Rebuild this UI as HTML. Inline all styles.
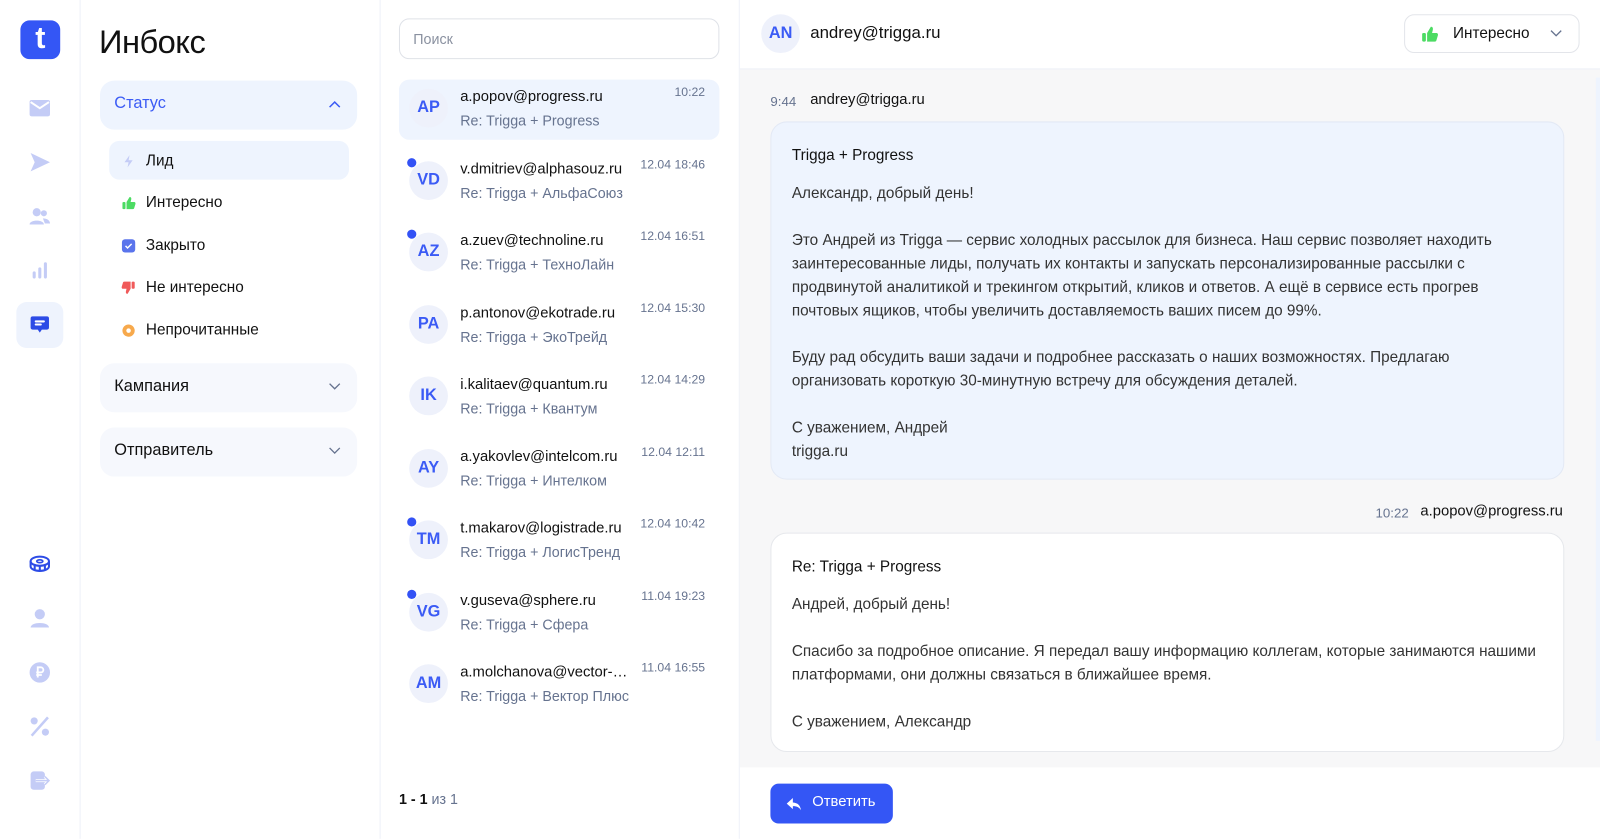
<!DOCTYPE html>
<html><head><meta charset="utf-8"><style>
*{box-sizing:border-box;margin:0;padding:0}
html,body{width:1600px;height:838px;overflow:hidden;background:#fff}
#w{position:absolute;left:0;top:0;width:1568px;height:822px;transform:scale(1.020408);transform-origin:0 0;font-family:"Liberation Sans","Noto Sans CJK SC",sans-serif;color:#111}
.abs{position:absolute}
.side{left:0;top:0;width:79px;height:822px;border-right:1px solid #eef1f8}
.filt{left:79px;top:0;width:294px;height:822px;border-right:1px solid #eef1f8}
.list{left:373px;top:0;width:352px;height:822px;border-right:1px solid #eef1f8}
.ico{position:absolute;left:27px;width:24px;height:24px}
h1{position:absolute;left:97px;top:23px;font-size:32px;font-weight:400;letter-spacing:-.5px}
.acc{position:absolute;left:98px;width:252px;height:48px;border-radius:14px;background:#f6f8fd;font-size:16px;padding:14px 14px}
.acc svg{position:absolute;right:16px;top:19px}
.st{position:absolute;left:143px;font-size:15px}
.sti{position:absolute;left:119px;width:14px;height:14px}
.item{position:absolute;left:399px;width:320px;height:60px}
.av{position:absolute;left:10px;top:10px;width:38px;height:38px;border-radius:50%;background:#eef1fb;color:#3b5bf5;font-size:16px;font-weight:bold;text-align:center;line-height:38px}
.dot{position:absolute;left:8px;top:7px;width:9px;height:9px;border-radius:50%;background:#3352f5}
.em{position:absolute;left:60px;top:10px;font-size:14.5px;color:#111;white-space:nowrap;width:168px;overflow:hidden;text-overflow:ellipsis}
.sb{position:absolute;left:60px;top:33px;font-size:14px;color:#66738f;white-space:nowrap}
.tm{position:absolute;right:14px;top:6px;font-size:12px;color:#66738f}
.card{position:absolute;left:771px;width:793px;border-radius:16px;padding:21px 50px 22px 20px;font-size:15px;line-height:23px;color:#333}
.card b{font-weight:400;color:#111;display:block}
</style></head><body><div id="w">
<div class="abs side">
 <div class="abs" style="left:20px;top:20px;width:39px;height:38px;border-radius:9px;background:#3456f5;color:#fff;font-size:30px;font-weight:700;text-align:center;line-height:36px">t</div>
 <svg class="ico" style="top:94px" viewBox="0 0 24 24"><rect x="2" y="4" width="20" height="16" rx="2" fill="#c4ccf6"/><path d="M3 6l9 6 9-6" stroke="#fff" stroke-width="2" fill="none"/></svg>
 <svg class="ico" style="top:147px" viewBox="0 0 24 24"><path d="M3 3l19 9-19 9 4-9z" fill="#c4ccf6"/></svg>
 <svg class="ico" style="top:200px" viewBox="0 0 24 24"><circle cx="9" cy="8" r="4" fill="#c4ccf6"/><circle cx="16" cy="9" r="3" fill="#c4ccf6"/><path d="M2 20c0-5 14-5 14 0zM15 14c4 0 7 2 7 5h-5z" fill="#c4ccf6"/></svg>
 <svg class="ico" style="top:253px" viewBox="0 0 24 24"><rect x="5" y="13" width="3" height="7" rx="1.5" fill="#c4ccf6"/><rect x="10.5" y="9" width="3" height="11" rx="1.5" fill="#c4ccf6"/><rect x="16" y="4" width="3" height="16" rx="1.5" fill="#c4ccf6"/></svg>
 <div class="abs" style="left:16px;top:296px;width:46px;height:45px;border-radius:10px;background:#eef3fd"></div>
 <svg class="ico" style="top:306px" viewBox="0 0 24 24"><path d="M5 4h14a2 2 0 012 2v9a2 2 0 01-2 2h-5l-2 3-2-3H5a2 2 0 01-2-2V6a2 2 0 012-2z" fill="#2c4be6"/><path d="M8 9h8M8 12h5" stroke="#fff" stroke-width="2" stroke-linecap="round"/></svg>
 <svg class="ico" style="top:541px" viewBox="0 0 24 24"><ellipse cx="12" cy="9" rx="9" ry="4.5" fill="none" stroke="#2c4be6" stroke-width="2"/><ellipse cx="12" cy="9" rx="3" ry="1.4" fill="none" stroke="#2c4be6" stroke-width="1.6"/><path d="M3 9v5c0 2.5 4 4.5 9 4.5s9-2 9-4.5V9M7 13v4M12 14v4.5M17 13v4" fill="none" stroke="#2c4be6" stroke-width="2"/></svg>
 <svg class="ico" style="top:594px" viewBox="0 0 24 24"><circle cx="12" cy="8" r="5" fill="#c4ccf6"/><path d="M3 21c0-6 18-6 18 0z" fill="#c4ccf6"/></svg>
 <svg class="ico" style="top:647px" viewBox="0 0 24 24"><circle cx="12" cy="12" r="10" fill="#c4ccf6"/><path d="M10 17V7h3a2.5 2.5 0 010 5H8.5M8.5 14.5H14" stroke="#fff" stroke-width="1.8" fill="none"/></svg>
 <svg class="ico" style="top:700px" viewBox="0 0 24 24"><circle cx="6.5" cy="6.5" r="3.5" fill="#c4ccf6"/><circle cx="17.5" cy="17.5" r="3.5" fill="#c4ccf6"/><path d="M20 3L4 21" stroke="#c4ccf6" stroke-width="2.5"/></svg>
 <svg class="ico" style="top:753px" viewBox="0 0 24 24"><rect x="3" y="3" width="14" height="18" rx="3" fill="#c4ccf6"/><path d="M8 12h13M17 8l4 4-4 4" stroke="#fff" stroke-width="3" fill="none"/><path d="M8 12h13M17 8l4 4-4 4" stroke="#c4ccf6" stroke-width="1.5" fill="none"/></svg>
</div>

<div class="abs filt"></div>
<h1>Инбокс</h1>
<div class="acc" style="top:79px;background:#eef4fe;color:#3b5bf5">Статус<svg width="12" height="8" viewBox="0 0 12 8"><path d="M1 7l5-5 5 5" stroke="#3b5bf5" stroke-width="1.5" fill="none"/></svg></div>
<div class="abs" style="left:107px;top:138px;width:235px;height:38px;border-radius:10px;background:#eef4fe"></div>
<svg class="sti" style="top:151px" viewBox="0 0 14 14"><path d="M8 1L3 8h4l-1 5 5-7H7z" fill="#c4ccf6"/></svg><div class="st" style="top:149px">Лид</div>
<svg class="sti" style="top:192px" viewBox="0 0 14 14"><rect x="1" y="6" width="3" height="7" rx="1" fill="#4cdb63"/><path d="M5 6l3-5c1.5 0 2 1 1.5 3l-.5 2h3.5c1 0 1.5 1 1.2 2l-1.2 4c-.3 1-1 1-2 1H5z" fill="#4cdb63"/></svg><div class="st" style="top:190px">Интересно</div>
<svg class="sti" style="top:234px" viewBox="0 0 14 14"><rect x="0.5" y="0.5" width="13" height="13" rx="3" fill="#5a74ec"/><path d="M4 7l2 2 4-4" stroke="#fff" stroke-width="1.4" fill="none"/></svg><div class="st" style="top:232px">Закрыто</div>
<svg class="sti" style="top:275px" viewBox="0 0 14 14"><rect x="10" y="1" width="3" height="7" rx="1" fill="#f05a5a"/><path d="M9 8l-3 5c-1.5 0-2-1-1.5-3l.5-2H1.5c-1 0-1.5-1-1.2-2l1.2-4c.3-1 1-1 2-1H9z" fill="#f05a5a"/></svg><div class="st" style="top:273px">Не интересно</div>
<svg class="sti" style="top:317px" viewBox="0 0 14 14"><circle cx="7" cy="7" r="6" fill="#f7a94c"/><circle cx="7" cy="7" r="2.2" fill="#fff"/></svg><div class="st" style="top:315px">Непрочитанные</div>
<div class="acc" style="top:356px">Кампания<svg width="12" height="8" viewBox="0 0 12 8"><path d="M1 1l5 5 5-5" stroke="#66738f" stroke-width="1.3" fill="none"/></svg></div>
<div class="acc" style="top:419px">Отправитель<svg width="12" height="8" viewBox="0 0 12 8"><path d="M1 1l5 5 5-5" stroke="#66738f" stroke-width="1.3" fill="none"/></svg></div>

<div class="abs list"></div>
<div class="abs" style="left:391px;top:18px;width:314px;height:40px;border:1.5px solid #dfe2e8;border-radius:10px;font-size:14px;color:#8a91a0;padding:11px 13px">Поиск</div>
<div class="abs" style="left:391px;top:78px;width:314px;height:59px;border-radius:10px;background:#eef4fe"></div>
<div class="item" style="top:77px;left:391px;width:314px"><div class="av">AP</div><div class="em">a.popov@progress.ru</div><div class="sb">Re: Trigga + Progress</div><div class="tm">10:22</div></div>
<div class="item" style="top:148px;left:391px;width:314px"><div class="av">VD</div><div class="dot"></div><div class="em">v.dmitriev@alphasouz.ru</div><div class="sb">Re: Trigga + АльфаСоюз</div><div class="tm">12.04 18:46</div></div>
<div class="item" style="top:218px;left:391px;width:314px"><div class="av">AZ</div><div class="dot"></div><div class="em">a.zuev@technoline.ru</div><div class="sb">Re: Trigga + ТехноЛайн</div><div class="tm">12.04 16:51</div></div>
<div class="item" style="top:289px;left:391px;width:314px"><div class="av">PA</div><div class="em">p.antonov@ekotrade.ru</div><div class="sb">Re: Trigga + ЭкоТрейд</div><div class="tm">12.04 15:30</div></div>
<div class="item" style="top:359px;left:391px;width:314px"><div class="av">IK</div><div class="em">i.kalitaev@quantum.ru</div><div class="sb">Re: Trigga + Квантум</div><div class="tm">12.04 14:29</div></div>
<div class="item" style="top:430px;left:391px;width:314px"><div class="av">AY</div><div class="em">a.yakovlev@intelcom.ru</div><div class="sb">Re: Trigga + Интелком</div><div class="tm">12.04 12:11</div></div>
<div class="item" style="top:500px;left:391px;width:314px"><div class="av">TM</div><div class="dot"></div><div class="em">t.makarov@logistrade.ru</div><div class="sb">Re: Trigga + ЛогисТренд</div><div class="tm">12.04 10:42</div></div>
<div class="item" style="top:571px;left:391px;width:314px"><div class="av">VG</div><div class="dot"></div><div class="em">v.guseva@sphere.ru</div><div class="sb">Re: Trigga + Сфера</div><div class="tm">11.04 19:23</div></div>
<div class="item" style="top:641px;left:391px;width:314px"><div class="av">AM</div><div class="em">a.molchanova@vector-plus.ru</div><div class="sb">Re: Trigga + Вектор Плюс</div><div class="tm">11.04 16:55</div></div>
<div class="abs" style="left:391px;top:775px;font-size:14px"><b>1 - 1</b> <span style="color:#66738f">из 1</span></div>

<div class="abs" style="left:746px;top:14px;width:38px;height:38px;border-radius:50%;background:#eef1fb;color:#3b5bf5;font-size:16px;font-weight:bold;text-align:center;line-height:38px">AN</div>
<div class="abs" style="left:794px;top:23px;font-size:16.5px">andrey@trigga.ru</div>
<div class="abs" style="left:1376px;top:14px;width:172px;height:38px;border:1.5px solid #e3e5ea;border-radius:10px"></div>
<svg class="abs" style="left:1392px;top:25px" width="18" height="17" viewBox="0 0 14 14"><rect x="1" y="6" width="3" height="7" rx="1" fill="#4cdb63"/><path d="M5 6l3-5c1.5 0 2 1 1.5 3l-.5 2h3.5c1 0 1.5 1 1.2 2l-1.2 4c-.3 1-1 1-2 1H5z" fill="#4cdb63"/></svg>
<div class="abs" style="left:1424px;top:24px;font-size:15px">Интересно</div>
<svg class="abs" style="left:1519px;top:29px" width="12" height="8" viewBox="0 0 12 8"><path d="M1 1l5 5 5-5" stroke="#66738f" stroke-width="1.3" fill="none"/></svg>

<div class="abs" style="left:725px;top:67px;width:843px;height:685px;background:#f7f7f8;border-top:1px solid #eef1f8"></div>
<div class="abs" style="left:1564px;top:76px;width:4px;height:650px;background:#eef4fe"></div>
<div class="abs" style="left:755px;top:92px;font-size:13px;color:#66738f">9:44</div>
<div class="abs" style="left:794px;top:90px;font-size:14.5px">andrey@trigga.ru</div>
<div class="card" style="left:755px;top:119px;width:778px;height:351px;background:#eef4fe;border:1px solid #e3e9f5">
<b>Trigga + Progress</b><div style="height:14px"></div>
Александр, добрый день!<br><br>
Это Андрей из Trigga — сервис холодных рассылок для бизнеса. Наш сервис позволяет находить заинтересованные лиды, получать их контакты и запускать персонализированные рассылки с продвинутой аналитикой и трекингом открытий, кликов и ответов. А ещё в сервисе есть прогрев почтовых ящиков, чтобы увеличить доставляемость ваших писем до 99%.<br><br>
Буду рад обсудить ваши задачи и подробнее рассказать о наших возможностях. Предлагаю организовать короткую 30-минутную встречу для обсуждения деталей.<br><br>
С уважением, Андрей<br>trigga.ru</div>
<div class="abs" style="left:1348px;top:495px;font-size:13px;color:#66738f">10:22</div>
<div class="abs" style="left:1392px;top:493px;font-size:14.5px">a.popov@progress.ru</div>
<div class="card" style="left:755px;top:522px;width:778px;height:215px;background:#fff;border:1px solid #e6e8ec;padding-right:20px">
<b>Re: Trigga + Progress</b><div style="height:14px"></div>
Андрей, добрый день!<br><br>
Спасибо за подробное описание. Я передал вашу информацию коллегам, которые занимаются нашими платформами, они должны связаться в ближайшее время.<br><br>
С уважением, Александр</div>

<div class="abs" style="left:755px;top:768px;width:120px;height:39px;border-radius:8px;background:#3456f5;color:#fff;font-size:14.5px;padding:10px 0 0 41px">Ответить</div>
<svg class="abs" style="left:770px;top:781px" width="16" height="14" viewBox="0 0 16 14"><path d="M7 1L1 6.5 7 12V9c4 0 6 1 8 4-1-5-3-7-8-7.5z" fill="#fff"/></svg>
</div></body></html>
